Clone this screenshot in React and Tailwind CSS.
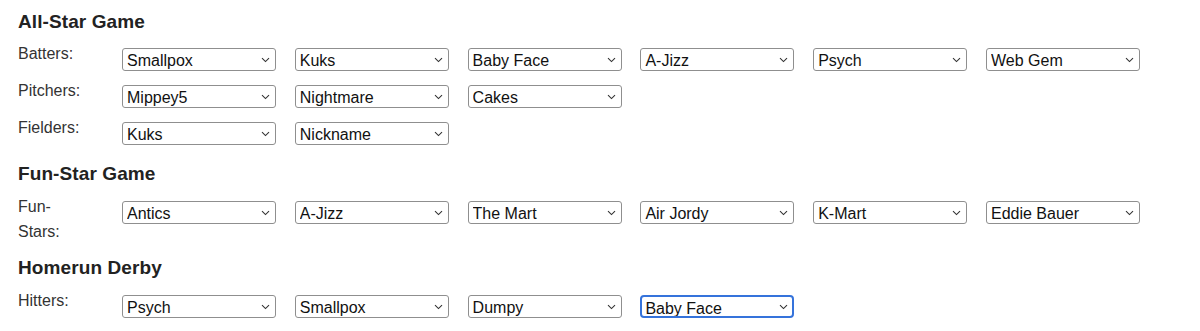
import React from 'react'

const sections = [
  {
    title: 'All-Star Game',
    rows: [
      { label: 'Batters:', picks: ['Smallpox', 'Kuks', 'Baby Face', 'A-Jizz', 'Psych', 'Web Gem'] },
      { label: 'Pitchers:', picks: ['Mippey5', 'Nightmare', 'Cakes'] },
      { label: 'Fielders:', picks: ['Kuks', 'Nickname'] },
    ],
  },
  {
    title: 'Fun-Star Game',
    rows: [
      { label: 'Fun-Stars:', picks: ['Antics', 'A-Jizz', 'The Mart', 'Air Jordy', 'K-Mart', 'Eddie Bauer'] },
    ],
  },
  {
    title: 'Homerun Derby',
    rows: [
      { label: 'Hitters:', picks: ['Psych', 'Smallpox', 'Dumpy', 'Baby Face'], focused: 3 },
    ],
  },
]

function Chevron() {
  return (
    <svg width="9" height="6" viewBox="0 0 9 6" className="pointer-events-none absolute right-[6px] top-[9px]">
      <path d="M1 1.2 L4.5 4.6 L8 1.2" fill="none" stroke="#333" strokeWidth="1.1" />
    </svg>
  )
}

function Pick({ value, focused }) {
  return (
    <div className="relative w-[154px] shrink-0">
      <select
        defaultValue={value}
        className={
          focused
            ? 'block h-[23px] w-full appearance-none rounded-[4px] border-2 border-[#3573db] bg-white pl-[3px] pt-[2px] text-[16px] leading-[19px] text-[#111] outline-none'
            : 'block h-[23px] w-full appearance-none rounded-[3px] border border-[#8f8f8f] bg-white pl-[4px] pt-[2px] text-[16px] leading-[19px] text-[#111] outline-none'
        }
      >
        <option>{value}</option>
      </select>
      <Chevron />
    </div>
  )
}

export default function App() {
  return (
    <div className="bg-white px-[18px] pt-[11px] font-['Liberation_Sans',Arial,sans-serif] text-[#222]">
      {sections.map((s, i) => (
        <div key={s.title} className={i === 0 ? '' : i === 1 ? 'mt-[18px]' : 'mt-[13px]'}>
          <h2 className={(i === 0 ? 'mb-[8px]' : 'mb-[9px]') + ' text-[19px] font-bold leading-[22px] tracking-[0.1px] text-[#222]'}>{s.title}</h2>
          <div className="flex flex-col gap-[7px]">
            {s.rows.map((r) => (
              <div key={r.label} className="flex items-start">
                <div className="w-[66px] mr-[38px] text-[16px] leading-[25px] text-[#333]">{r.label}</div>
                <div className="mt-[7px] flex gap-[18.8px]">
                  {r.picks.map((p, j) => (
                    <Pick key={j} value={p} focused={r.focused === j} />
                  ))}
                </div>
              </div>
            ))}
          </div>
        </div>
      ))}
    </div>
  )
}
